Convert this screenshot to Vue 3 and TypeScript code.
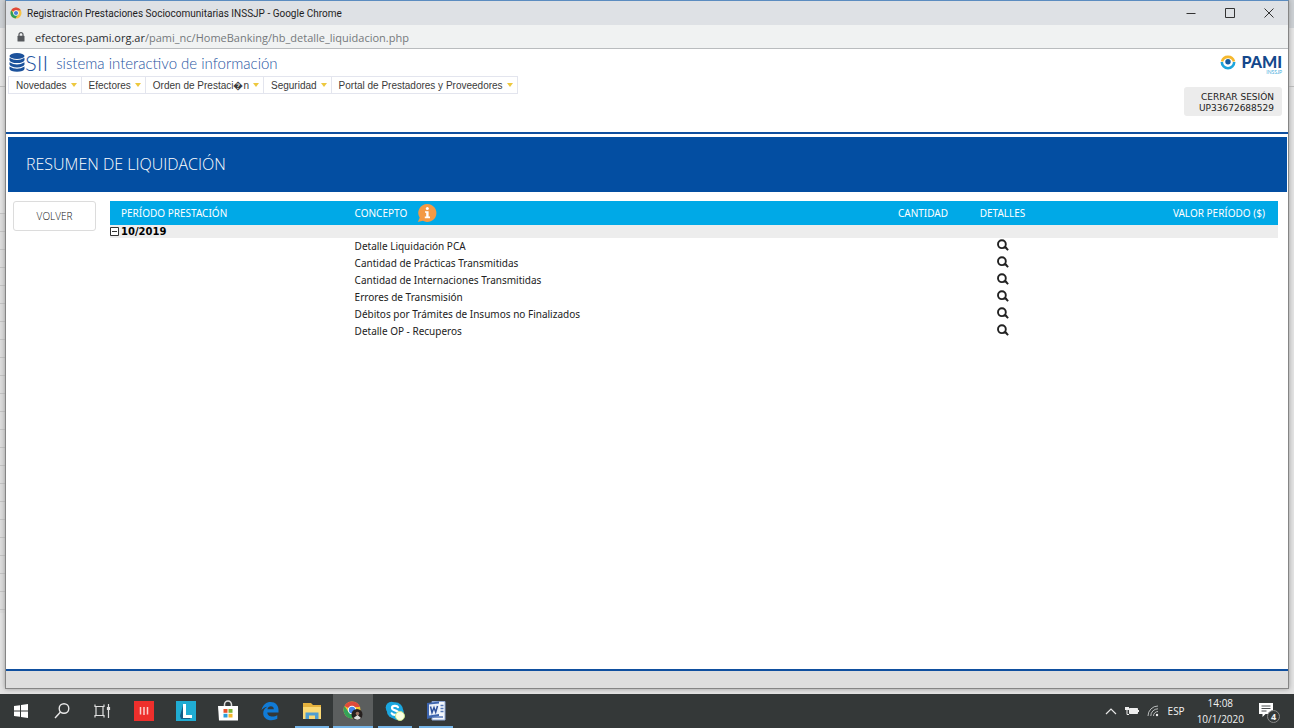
<script setup lang="ts">
interface MenuItem { label: string }

const menu: MenuItem[] = [
  { label: 'Novedades' },
  { label: 'Efectores' },
  { label: 'Orden de Prestaci\uFFFDn' },
  { label: 'Seguridad' },
  { label: 'Portal de Prestadores y Proveedores' },
]

const concepts: string[] = [
  'Detalle Liquidación PCA',
  'Cantidad de Prácticas Transmitidas',
  'Cantidad de Internaciones Transmitidas',
  'Errores de Transmisión',
  'Débitos por Trámites de Insumos no Finalizados',
  'Detalle OP - Recuperos',
]
</script>

<template>
  <div class="desktop">
    <div class="workspace">
      <div class="window">
        <header class="titlebar">
          <svg class="favicon" viewBox="0 0 24 24" aria-hidden="true">
            <circle cx="12" cy="12" r="11" fill="#f6c343" />
            <path d="M12 12 2.500 6.500A11 11 0 0 1 21.500 6.500L12 7z" fill="#e0473b" />
            <path d="M2.500 6.500A11 11 0 0 0 11 23L16.500 14 12 12 7.500 14z" fill="#2f9e57" />
            <circle cx="12" cy="12" r="5.500" fill="#fff" />
            <circle cx="12" cy="12" r="4.200" fill="#4a7fd4" />
          </svg>
          <span class="title">Registración Prestaciones Sociocomunitarias INSSJP - Google Chrome</span>
          <div class="controls">
            <button type="button" aria-label="Minimizar"><svg viewBox="0 0 10 10"><path d="M0.500 5.500h9" /></svg></button>
            <button type="button" aria-label="Maximizar"><svg viewBox="0 0 10 10"><path d="M.5.5h9v9h-9z" /></svg></button>
            <button type="button" aria-label="Cerrar"><svg viewBox="0 0 10 10"><path d="M.5.5l9 9M9.500.5l-9 9" /></svg></button>
          </div>
        </header>

        <div class="address">
          <svg class="lock" viewBox="0 0 8 10" aria-hidden="true">
            <path d="M2 4V2.600a2 2 0 0 1 4 0V4" fill="none" stroke="#55585c" stroke-width="1.200" />
            <rect x="0.500" y="3.800" width="7" height="5.700" rx="0.600" fill="#55585c" />
          </svg>
          <span><span class="host">efectores.pami.org.ar</span>/pami_nc/HomeBanking/hb_detalle_liquidacion.php</span>
        </div>

        <div class="top">
          <div class="top-left">
            <div class="brand">
              <svg class="stack" viewBox="0 0 16 19" aria-hidden="true">
                <g fill="#1c529c">
                  <ellipse cx="8" cy="3" rx="7.500" ry="3" />
                  <path d="M.5 4.800q7.500 4.400 15 0v2.400q-1 2.800-7.500 2.800T.5 7.200z" />
                  <path d="M.5 9.200q7.500 4.400 15 0v2.400q-1 2.800-7.500 2.800T.5 11.600z" />
                  <path d="M.5 13.600q7.500 4.400 15 0V16q-1 2.800-7.500 2.800T.5 16z" />
                </g>
              </svg>
              <span class="sii">SII</span>
              <span class="tagline">sistema interactivo de información</span>
            </div>
            <nav class="menu">
              <button v-for="item in menu" :key="item.label" type="button">
                {{ item.label }}<i class="caret"></i>
              </button>
            </nav>
          </div>
          <div class="top-right">
            <div class="pami">
              <svg class="pami-eye" viewBox="0 0 16 16" aria-hidden="true">
                <path d="M2 7.500A6.200 6.200 0 0 1 14 7.500" fill="none" stroke="#f5b82e" stroke-width="2.600" />
                <path d="M1.800 8A6.200 6.200 0 0 0 14.200 8" fill="none" stroke="#1da5dc" stroke-width="2.600" />
                <circle cx="8" cy="7.800" r="2.700" fill="#155a9f" />
              </svg>
              <div class="pami-name">PAMI<small>INSSJP</small></div>
            </div>
            <button type="button" class="logout">CERRAR SESIÓN<br>UP33672688529</button>
          </div>
        </div>

        <main class="content">
          <h1>RESUMEN DE LIQUIDACIÓN</h1>
          <div class="body">
            <button type="button" class="back">VOLVER</button>
            <table>
              <colgroup>
                <col class="c-period"><col><col class="c-qty"><col class="c-detail"><col class="c-value">
              </colgroup>
              <thead>
                <tr>
                  <th>PERÍODO PRESTACIÓN</th>
                  <th>
                    <span class="concept">CONCEPTO
                      <svg class="info" viewBox="0 0 20 20" role="img" aria-label="Información">
                        <path d="M10.500 1a9 9 0 1 1-4.600 16.800L.8 19l1.900-4.200A9 9 0 0 1 10.500 1z" fill="#f39a45" />
                        <circle cx="10.300" cy="5.500" r="1.500" fill="#fff" />
                        <path d="M8 8.200h3.600v5.400H13v1.600H7.800v-1.600h1.400V9.800H8z" fill="#fff" />
                      </svg>
                    </span>
                  </th>
                  <th class="num">CANTIDAD</th>
                  <th class="mid">DETALLES</th>
                  <th class="val">VALOR PERÍODO ($)</th>
                </tr>
              </thead>
              <tbody>
                <tr class="group">
                  <td colspan="5">
                    <button type="button" class="toggle">
                      <svg viewBox="0 0 9 9" aria-hidden="true"><path d="M.5.5h8v8h-8zM2 4.500h5" /></svg>10/2019
                    </button>
                  </td>
                </tr>
                <tr v-for="name in concepts" :key="name" class="row">
                  <td></td>
                  <td>{{ name }}</td>
                  <td></td>
                  <td class="mid">
                    <button type="button" class="look" :aria-label="'Ver ' + name">
                      <svg viewBox="0 0 12 12">
                        <circle cx="4.900" cy="5.200" r="3.900" fill="none" stroke="#222" stroke-width="1.900" />
                        <path d="M6.500 8.500h2.500l2 2.700M8 8l3 3" fill="none" stroke="#222" stroke-width="1.800" />
                      </svg>
                    </button>
                  </td>
                  <td></td>
                </tr>
              </tbody>
            </table>
          </div>
        </main>
        <footer class="page-foot"></footer>
      </div>
    </div>

    <footer class="taskbar">
      <div class="apps">
        <button type="button" class="system" aria-label="Inicio">
          <svg viewBox="0 0 24 24"><path d="M5 7l6-.8v5.300H5zM12 6l7-1v6.500h-7zM5 12.500h6v5.300L5 17zM12 12.500h7V19l-7-1z" fill="#fff" /></svg>
        </button>
        <button type="button" class="system" aria-label="Buscar">
          <svg viewBox="0 0 24 24" fill="none" stroke="#e8e8e8" stroke-width="1.400"><circle cx="14" cy="9.500" r="4.800" /><path d="M10.500 13 5 19" /></svg>
        </button>
        <button type="button" class="system" aria-label="Vista de tareas">
          <svg viewBox="0 0 24 24" fill="none" stroke="#e0e0e0" stroke-width="1.200"><path d="M4 5.500v2h9v-2M5 8v8M12 8v8M4 18.500v-2h9v2M17.500 5v14" /><path d="M16.500 8.500h2v2h-2z" fill="#e0e0e0" /></svg>
        </button>
        <button type="button" aria-label="Aplicación roja">
          <svg viewBox="0 0 24 24"><path d="M2 2h20v20H2z" fill="#ee2f2c" /><path d="M8.500 8v7.500M12 8v8M15.500 8v7.500" stroke="#fbd0cd" stroke-width="1.500" /></svg>
        </button>
        <button type="button" aria-label="Aplicación L">
          <svg viewBox="0 0 24 24"><path d="M2 2h20v20H2z" fill="#20acd3" /><path d="M6 17l3-11v12h8l-1 2H7z" fill="#125c86" /><path d="M9 5h3v11h6v3H9z" fill="#fff" /></svg>
        </button>
        <button type="button" aria-label="Microsoft Store">
          <svg viewBox="0 0 24 24"><path d="M8.500 8V5.500a3.500 3.500 0 0 1 7 0V8" fill="none" stroke="#ddd" stroke-width="1.500" /><path d="M2 7h20v14.500H3z" fill="#fff" /><path d="M7.500 10H11.500v3.800h-4z" fill="#e8532c" /><path d="M12.500 10h4v3.800h-4z" fill="#7bb534" /><path d="M7.500 14.800h4v3.700h-4z" fill="#2a9ddb" /><path d="M12.500 14.800h4v3.700h-4z" fill="#f5b62b" /></svg>
        </button>
        <button type="button" aria-label="Edge">
          <svg viewBox="0 0 24 24"><path d="M3.500 11C5 5.500 8.500 3 12.500 3c5 0 8 3.500 8 8v2.500H9.300c.2 3 2.700 4 5 4 2 0 3.700-.5 5-1.300v3.600c-1.500.8-3.500 1.400-5.800 1.400-5 0-8.300-2.700-8.300-7 0-3.200 1.800-5.300 4.200-6.400-2.400.3-4.200 1.400-5.900 3.200zM9.400 10.300h6.400c0-2-1-3.100-2.900-3.100-1.800 0-3.100 1.100-3.500 3.100z" fill="#117bd6" /></svg>
        </button>
        <button type="button" class="open" aria-label="Explorador de archivos">
          <svg viewBox="0 0 24 24"><path d="M3 4h8l2 2h8v14H3z" fill="#e5b23e" /><path d="M3 8h18v12H3z" fill="#fbd974" /><path d="M5.500 20v-6.500h13V20h-3.500v-3.500H9V20z" fill="#4f9ed2" /></svg>
        </button>
        <button type="button" class="open active" aria-label="Chrome">
          <svg viewBox="0 0 24 24"><circle cx="11" cy="11" r="8.500" fill="#f6c433" /><path d="M11 11 3.500 7A8.500 8.500 0 0 1 19 8h-8z" fill="#df4a3c" /><path d="M3.500 7A8.500 8.500 0 0 0 11 19.500l3.500-6L11 11l-3.500 2z" fill="#35a258" /><circle cx="11" cy="11" r="4.200" fill="#fff" /><circle cx="11" cy="11" r="3.200" fill="#4285e8" /><circle cx="16" cy="15.500" r="5.500" fill="#26201f" /><circle cx="16.500" cy="14.500" r="1.800" fill="#9b7261" /><path d="M12.500 19l4-3 3.500 3q-3.500 3.500-7.500 0z" fill="#ddd" /></svg>
        </button>
        <button type="button" class="open" aria-label="Skype">
          <svg viewBox="0 0 24 24"><circle cx="8.500" cy="8.500" r="5.800" fill="#1ba7e0" /><circle cx="14.500" cy="14.500" r="6.500" fill="#1ba7e0" /><circle cx="12" cy="11.500" r="8.300" fill="#1ba7e0" /><path d="M15 8.200C14.200 6.600 9 6.200 9 9c0 3 6.200 1.700 6.200 4.800 0 2.900-5.500 2.700-6.500.5" fill="none" stroke="#fff" stroke-width="2.200" stroke-linecap="round" /><circle cx="17" cy="17" r="4.500" fill="#fbffe2" stroke="#c9e58a" stroke-width="1" /></svg>
        </button>
        <button type="button" class="open" aria-label="Word">
          <svg viewBox="0 0 24 24"><path d="M8 2.500h13V21H8z" fill="#f4f7fc" stroke="#90a8d5" /><path d="M3 4l12-1.500V17L3 20z" fill="#3c64ae" /><path d="M5 5.500l10-1V15L5 16.500z" fill="#eaf0fa" /><path d="M6.500 7.500l1.500 6 2-5 1.700 4.700 1.800-6.200" fill="none" stroke="#2c509b" stroke-width="1.500" /><path d="M16.500 6.500h3M16.500 9.500h3M16.500 12.500h3M9 18h10" stroke="#5478b9" stroke-width="1.300" /></svg>
        </button>
      </div>
      <div class="tray">
        <svg class="t-chev" viewBox="0 0 12 8" fill="none" stroke="#e6e6e6" stroke-width="1.200"><path d="M1 7l5-5 5 5" /></svg>
        <svg class="t-batt" viewBox="0 0 14 10"><path d="M4.500 2.500h8v5h-8z" fill="#eee" stroke="#eee" /><path d="M13 4h1v2h-1zM0 1h4v3H0z" fill="#eee" /><path d="M2 4v4.500h2" fill="none" stroke="#eee" /></svg>
        <svg class="t-wifi" viewBox="0 0 12 12" fill="none" stroke="#b9bcbc" stroke-width="1"><path d="M1 11A10 10 0 0 1 11 1M3.800 11A7.200 7.200 0 0 1 11 3.800M6.500 11A4.500 4.500 0 0 1 11 6.500" /><circle cx="10" cy="10" r="1.200" fill="#eee" stroke="none" /></svg>
        <span class="lang">ESP</span>
        <div class="clock">14:08<br>10/1/2020</div>
        <div class="notice">
          <svg viewBox="0 0 16 16"><path d="M0 0h14v11H6.500L3.500 14v-3H0z" fill="#fff" /><path d="M2.500 3h9M2.500 5.500h9M2.500 8h5" stroke="#4b4f50" stroke-width="1" /></svg>
          <b>4</b>
        </div>
      </div>
    </footer>
  </div>
</template>

<style>
body { margin: 0; }
</style>

<style scoped>
* { box-sizing: border-box; }
button { border: 0; padding: 0; margin: 0; background: none; color: inherit; font: inherit; }
svg { display: block; }

.desktop {
  min-height: 100vh;
  display: flex;
  flex-direction: column;
  font-family: "DejaVu Sans", Verdana, sans-serif;
  font-size: 10px;
  background: #e2e2e2;
}
.workspace {
  flex: 1;
  display: flex;
  padding: 0 5px 5px;
  background:
    repeating-linear-gradient(#c4c4c4 0 1px, #dedede 1px 18px) left 213px / 5px 400px no-repeat,
    linear-gradient(#cdd1d5 0 28px, #e6e6e6 28px 86px, #bdbdbd 86px 87px, #e4e4e4 87px);
}
.window {
  flex: 1;
  display: flex;
  flex-direction: column;
  background: #fff;
  border: 1px solid #858585;
  border-top-color: #5b8cc0;
  box-shadow: 0 0 5px #999;
}
.titlebar {
  height: 24px;
  display: flex;
  align-items: center;
  padding-left: 4px;
  background: #dee1e5;
  font: 10px Roboto, sans-serif;
  color: #1e1e1e;
}
.favicon { width: 12px; height: 12px; margin-right: 5px; }
.title { flex: 1; }
.controls { display: flex; }
.controls button { width: 39px; height: 24px; display: grid; place-items: center; }
.controls svg { width: 10px; height: 10px; fill: none; stroke: #333; stroke-width: 1; }
.address {
  height: 24px;
  display: flex;
  align-items: center;
  gap: 10px;
  padding: 1px 11px 0;
  background: #f0f2f2;
  border-bottom: 1px solid #b9bcbe;
  font: 11px "Open Sans", "Noto Sans", sans-serif;
  color: #75797c;
}
.lock { width: 8px; height: 10px; }
.host { color: #2b2d30; }

.top {
  display: flex;
  justify-content: space-between;
  height: 85px;
  border-bottom: 2px solid #0f4f9f;
}
.brand { display: flex; align-items: center; height: 27px; padding-left: 3px; color: #1f55a2; font-family: Lato, sans-serif; font-weight: 300; }
.stack { width: 16px; height: 19px; }
.sii { font-size: 22px; }
.tagline { font-size: 15px; margin-left: 8px; }
.menu { display: flex; margin-left: 2px; border: 1px solid #e3e5ee; border-width: 1px 0 1px 1px; }
.menu button {
  display: flex;
  align-items: center;
  height: 16px;
  padding: 0 4px 0 7px;
  border-right: 1px solid #e3e5ee;
  font: 10px "Liberation Sans", Arial, sans-serif;
  color: #3a3a3a;
  white-space: nowrap;
}
.caret { margin-left: 4px; border: 3px solid transparent; border-top: 4px solid #edc83e; border-bottom: 0; }
.top-right { display: flex; flex-direction: column; align-items: flex-end; padding-right: 6px; }
.pami { display: flex; align-items: flex-start; gap: 5px; padding-top: 5px; height: 38px; }
.pami-eye { width: 16px; height: 16px; }
.pami-name {
  display: flex;
  flex-direction: column;
  align-items: flex-end;
  font: 900 16px/16px Lato, sans-serif;
  color: #14488c;
}
.pami-name small { font: 5px/4px Lato, sans-serif; color: #4aaedc; }
.logout {
  width: 98px;
  height: 29px;
  padding: 2px 8px 0 0;
  background: #ececec;
  border-radius: 3px;
  font-size: 9px;
  line-height: 11px;
  text-align: right;
  color: #222;
}

.content { flex: 1; padding: 3px 1px 0 2px; }
h1 {
  margin: 0;
  height: 55px;
  padding-left: 18px;
  background: #034ea2;
  color: #fff;
  font: 300 16px/55px "Open Sans", sans-serif;
}
.body { display: flex; align-items: flex-start; gap: 14px; padding: 9px 9px 0 5px; }
.back {
  width: 83px;
  height: 30px;
  border: 1px solid #dcdcdc;
  border-radius: 3px;
  font: 300 10px "Open Sans", sans-serif;
  color: #111;
}
table { flex: 1; width: 100%; table-layout: fixed; border-collapse: collapse; color: #222; font-family: "Noto Sans", sans-serif; }
.c-period { width: 20%; }
.c-value { width: 232px; }
.c-qty { width: 80px; }
.c-detail { width: 87px; }
th, td { padding: 0 11px; text-align: left; }
th { height: 24px; background: #00a9e7; color: #fff; font-weight: 400; font-size: 10px; }
.concept { display: flex; align-items: center; gap: 10px; }
.info { width: 20px; height: 20px; }
.num { text-align: right; }
.mid { text-align: center; padding: 0; }
.val { text-align: right; padding-right: 13px; }
.group td { height: 13px; padding: 0; background: #ededed; }
.toggle { display: flex; align-items: center; gap: 2px; height: 13px; font-family: "DejaVu Sans", sans-serif; font-weight: 700; color: #000; }
.toggle svg { width: 9px; height: 9px; fill: #fff; stroke: #333; }
.row td { height: 17px; padding-bottom: 2px; }
.row .mid { vertical-align: top; padding-top: 1px; }
.look { display: block; margin: 0 auto; }
.look svg { width: 12px; height: 12px; }
.page-foot { height: 19px; background: #dedede; border-top: 2px solid #0f4f9f; }

.taskbar {
  height: 34px;
  display: flex;
  justify-content: space-between;
  background: #343838;
  color: #f2f2f2;
  font-family: "Open Sans", "Noto Sans", sans-serif;
}
.apps { display: flex; }
.apps button { width: 42px; display: grid; place-items: center; }
.apps .system { width: 41px; }
.apps svg { width: 24px; height: 24px; }
.apps .open { width: 41px; background: linear-gradient(#76b5e8, #76b5e8) center bottom / 34px 2px no-repeat; }
.apps .active { background-color: #5b5e5e; background-size: 100% 2px; width: 40px; margin: 0 1px; }
.tray { display: flex; align-items: center; padding-right: 14px; }
.t-chev { width: 12px; height: 8px; margin-right: 8px; }
.t-batt { width: 14px; height: 10px; margin-right: 8px; }
.t-wifi { width: 12px; height: 12px; margin-right: 9px; }
.lang { margin-right: 12px; }
.clock { line-height: 16px; text-align: center; margin-right: 15px; }
.notice { display: flex; align-items: flex-end; }
.notice svg { width: 16px; height: 16px; }
.notice b {
  width: 13px;
  height: 13px;
  margin: 0 0 -4px -8px;
  border: 1px solid #888;
  border-radius: 50%;
  background: #343838;
  font-size: 9px;
  line-height: 11px;
  text-align: center;
}
</style>
